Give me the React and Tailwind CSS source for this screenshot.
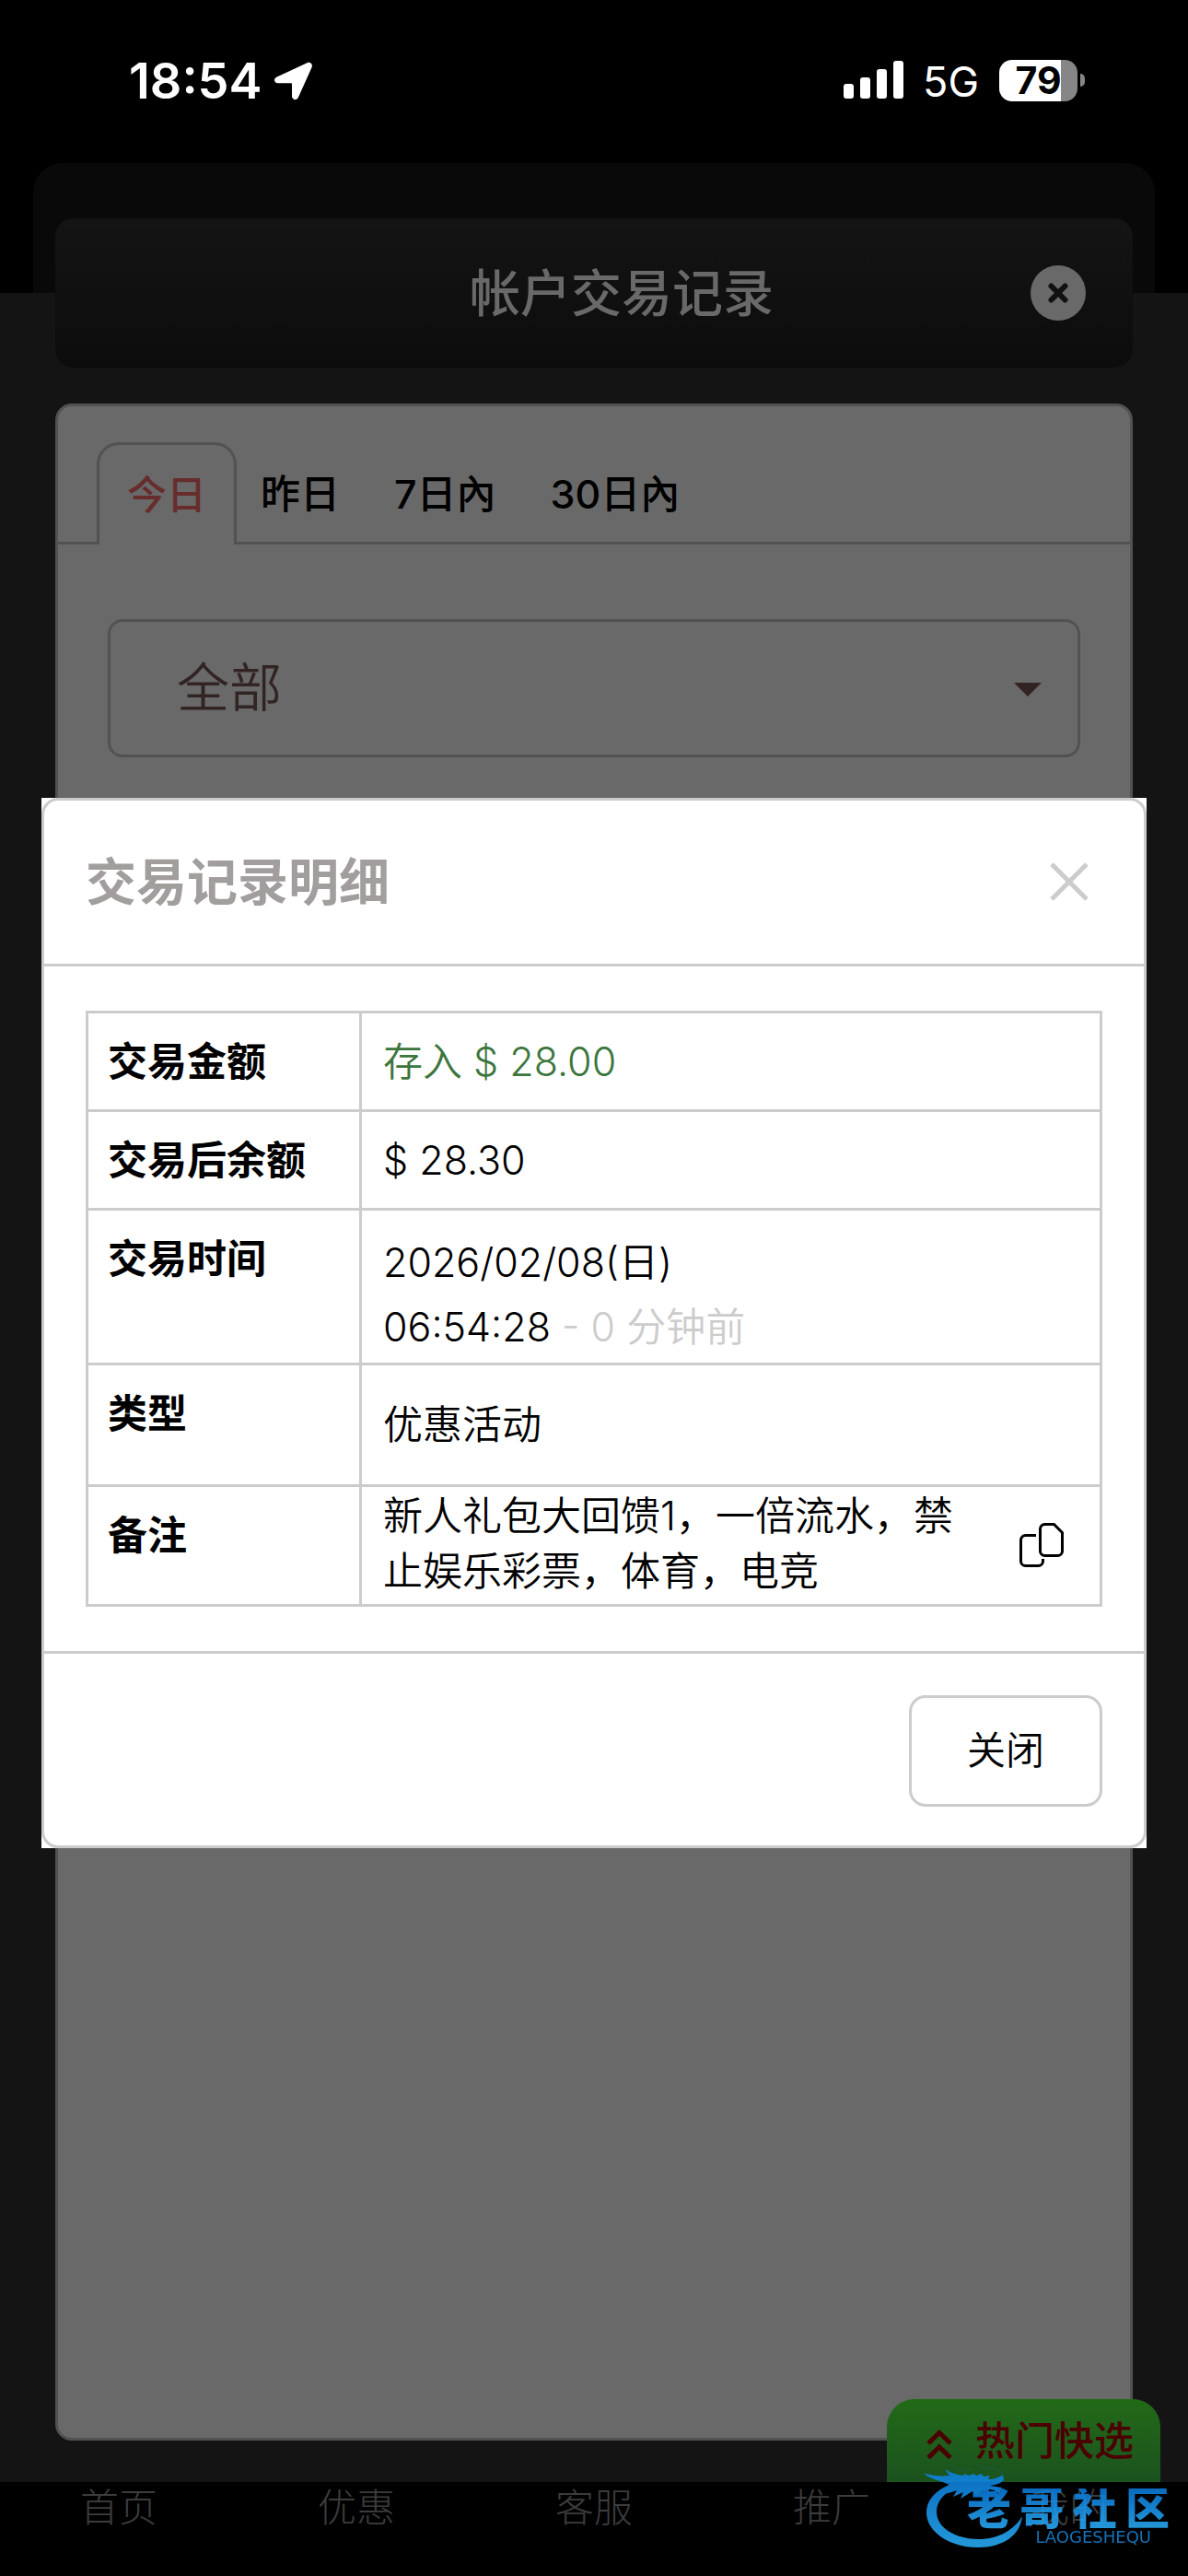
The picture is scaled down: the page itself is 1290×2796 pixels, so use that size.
import React from "react";

const tabs = ["今日", "昨日", "7日內", "30日內"];
const navItems = ["首页", "优惠", "客服", "推广", "我的"];

function StatusBar() {
  return (
    <div className="flex h-[177px] items-start justify-between pt-[55px] pr-[112px] pl-[140px] text-white">
      <div className="flex h-[66px] items-center gap-3">
        <span className="text-[54px] leading-[66px] font-semibold">18:54</span>
        <svg className="h-[44px] w-[44px]" viewBox="0 0 44 44" fill="#fff" aria-hidden="true">
          <path d="M36.5 2.2C39.6.8 43 3.600 41.600 7L27 39.500c-1.700 4-7 3.300-7-1.200V25.500c0-.8-.4-1.200-1.200-1.200H5c-4.600 0-5.400-5-1.300-6.900z" />
        </svg>
      </div>
      <div className="flex h-[64px] items-center">
        <svg className="h-[42px] w-[66px]" viewBox="0 0 66 42" fill="#fff" aria-hidden="true">
          <rect x="0" y="25" width="11" height="16" rx="3" />
          <rect x="18" y="18" width="11" height="23" rx="3" />
          <rect x="36" y="9" width="11" height="32" rx="3" />
          <rect x="54" y="0" width="11" height="41" rx="3" />
        </svg>
        <span className="ml-5 pt-1 text-[45px] leading-[64px]">5G</span>
        <div className="ml-[22px] flex items-center gap-[3px]">
          <div className="flex h-[45px] w-[85px] items-center justify-center rounded-[14px] bg-[linear-gradient(90deg,#fff_79%,#868686_79%)] text-[41px] leading-[45px] font-bold text-black">
            79
          </div>
          <div className="h-[14px] w-[5px] rounded-r-full bg-[#868686]" />
        </div>
      </div>
    </div>
  );
}

function Page() {
  return (
    <main className="relative flex flex-1 flex-col bg-[linear-gradient(#000_141px,#141414_141px)] px-[60px] pt-[60px] pb-[45px]">
      <div className="absolute inset-x-9 top-0 h-[141px] rounded-t-[32px] bg-[#090909]" />
      <header className="relative flex h-[162px] items-center justify-center rounded-[20px] bg-linear-to-b from-[#141414] to-[#0c0c0c]">
        <h1 className="pl-[60px] text-[55px] leading-[66px] font-medium text-[#696969]">帐户交易记录</h1>
        <button type="button" aria-label="关闭页面" className="absolute right-[51px]">
          <svg className="h-[60px] w-[60px]" viewBox="0 0 60 60" aria-hidden="true">
            <circle cx="30" cy="30" r="30" fill="#696969" />
            <path d="M22.500 22.500l15 15M37.500 22.500l-15 15" stroke="#111" strokeWidth="6" strokeLinecap="round" />
          </svg>
        </button>
      </header>
      <section className="relative mt-[39px] flex-1 rounded-[18px] border-[3px] border-[#525252] bg-[#696969]">
        <div role="tablist" className="flex items-end border-b-[3px] border-[#525252] pt-[39px] pl-[42px]">
          {tabs.map((t, i) => (
            <button
              key={t}
              type="button"
              role="tab"
              aria-selected={i === 0}
              className={
                i === 0
                  ? "-mr-[7px] -mb-[3px] h-[111px] rounded-t-[24px] border-[3px] border-b-0 border-[#525252] bg-[#696969] px-[30px] text-[43px] leading-[60px] font-medium text-[#672c2c]"
                  : "-mr-[7px] -mb-[3px] h-[111px] border-[3px] border-transparent px-[30px] text-[43px] leading-[60px] font-medium text-black"
              }
            >
              {t}
            </button>
          ))}
        </div>
        <div className="relative mx-[54px] mt-[81px]">
          <select
            aria-label="交易类型"
            className="h-[150px] w-full appearance-none rounded-[16px] border-[3px] border-[#525252] bg-[#696969] pl-[72px] text-[57px] font-[350] text-[#332424]"
          >
            <option>全部</option>
          </select>
          <svg className="pointer-events-none absolute top-[69px] right-[42px] h-[15px] w-[30px]" viewBox="0 0 30 15" fill="#332424" aria-hidden="true">
            <path d="M0 0h30L15 15z" />
          </svg>
        </div>
      </section>
    </main>
  );
}

function BottomNav() {
  return (
    <nav className="relative h-[102px] bg-black">
      <button
        type="button"
        className="absolute right-[30px] bottom-full flex h-[90px] w-[297px] items-center rounded-t-[30px] bg-linear-to-b from-[#226a16] to-[#1b521e] pl-[42px] text-[43px] leading-[60px] font-medium text-[#4a0000]"
      >
        <svg className="mt-[8px] mr-[24px] h-[32px] w-[30px]" viewBox="0 0 30 32" fill="none" stroke="#4a0000" strokeWidth="5" aria-hidden="true">
          <path d="M3 15L15 3.500 27 15M3 30.500L15 19l12 11.500" />
        </svg>
        热门快选
      </button>
      <div className="grid grid-cols-5">
        {navItems.map((n) => (
          <a key={n} href="#" className="text-center text-[42px] leading-[56px] font-light text-[#3c3c3c]">
            {n}
          </a>
        ))}
      </div>
      <Watermark />
    </nav>
  );
}

function Watermark() {
  return (
    <div className="pointer-events-none absolute right-[20px] bottom-[30px] flex h-[90px] w-[268px] opacity-85">
      <svg className="absolute inset-0 h-[90px] w-[110px]" viewBox="0 0 110 90" aria-hidden="true">
        <defs>
          <linearGradient id="wave" gradientUnits="userSpaceOnUse" x1="0" y1="6" x2="0" y2="90">
            <stop offset="0" stopColor="#0b80e4" />
            <stop offset="1" stopColor="#2bb4ff" />
          </linearGradient>
        </defs>
        <g fill="url(#wave)">
          <path d="M36 18C16 25 4 36 4 51c0 21 25 38 56 38 27 0 46-13 48-34-9 15-26 25-47 25C36 80 15 68 15 50c0-11 8-20 22-27z" />
          <path d="M1 8c8 3 17 4 28 3l-5-7c7 4 13 6 19 7l3-2 4 2 5-2 3 2 6-2 2 3 7-1-2 4c7 0 11-2 16-5l1 6c-4 4-9 5-15 6l13 2-3 6c-6-4-12-5-18-3l-7 5-4-4-13 8 3-7-11 5 4-7c-7 3-15 4-22 5 4-4 10-8 16-10C22 17 6 15 1 8z" />
        </g>
        <path d="M32 0c6 7 14 7 22 3M58 0c14 3 29 4 30 11" fill="none" stroke="#1d5a34" strokeWidth="2" />
      </svg>
      <div className="ml-[48px] flex flex-1 flex-col items-end">
        <div className="mt-[25px] flex w-full justify-between bg-linear-to-b from-[#0b7de0] to-[#2bb2ff] bg-clip-text text-[48px] leading-[44px] font-black text-transparent">
          <span>老</span>
          <span>哥</span>
          <span>社</span>
          <span>区</span>
        </div>
        <span className="mr-5 font-['DejaVu_Sans'] text-[18px] leading-[18px] text-[#1c86d6]">LAOGESHEQU</span>
      </div>
    </div>
  );
}

function Row({ label, children }) {
  return (
    <tr className="border-[3px] border-[#ccc]">
      <th scope="row" className="w-[297px] border-r-[3px] border-[#ccc] pt-[22px] pb-[22px] pl-[21px] text-left align-top text-[43px] leading-[60px] font-semibold">
        {label}
      </th>
      <td className="pl-[23px] text-[43px] leading-[60px] font-[350]">{children}</td>
    </tr>
  );
}

function DetailModal() {
  return (
    <div className="fixed inset-0 flex items-center justify-center px-[45px] pt-[75px]">
      <div role="dialog" aria-labelledby="detail-title" className="w-full bg-white text-black">
        <div className="rounded-[18px] border-[3px] border-[#ccc]">
          <div className="flex h-[180px] items-center justify-between border-b-[3px] border-[#ccc] pr-[60px] pl-[45px]">
            <h2 id="detail-title" className="text-[55px] leading-[66px] font-semibold text-[#a29e9d]">交易记录明细</h2>
            <button type="button" aria-label="关闭明细">
              <svg className="h-[42px] w-[42px]" viewBox="0 0 42 42" fill="none" stroke="#ccc" strokeWidth="5" aria-hidden="true">
                <path d="M2 2l38 38M40 2L2 40" />
              </svg>
            </button>
          </div>
          <div className="px-[45px] py-[48px]">
            <table className="w-full table-fixed border-collapse">
              <tbody>
                <Row label="交易金额">
                  <span className="text-[#3c763d]">存入 $ 28.00</span>
                </Row>
                <Row label="交易后余额">$ 28.30</Row>
                <Row label="交易时间">
                  <div className="pt-[21px] pb-1 leading-[70px]">
                    2026/02/08(日)
                    <br />
                    06:54:28 <span className="text-[#ccc]">- 0 分钟前</span>
                  </div>
                </Row>
                <Row label="类型">
                  <div className="flex h-[129px] items-center">优惠活动</div>
                </Row>
                <Row label="备注">
                  <div className="flex items-center pt-[1px] pb-[6px]">
                    <p className="flex-1">新人礼包大回馈1，一倍流水，禁止娱乐彩票，体育，电竞</p>
                    <button type="button" aria-label="复制备注" className="mt-1 mr-[39px] ml-[60px]">
                      <svg className="h-[48px] w-[48px]" viewBox="0 0 48 48" fill="none" stroke="#000" strokeWidth="3" aria-hidden="true">
                        <path d="M27.500 1.500h10l9 9v20a5 5 0 0 1-5 5h-14a5 5 0 0 1-5-5v-24a5 5 0 0 1 5-5z" />
                        <path d="M18 13.500H6.500a5 5 0 0 0-5 5v23a5 5 0 0 0 5 5h14a5 5 0 0 0 5-5V39" />
                      </svg>
                    </button>
                  </div>
                </Row>
              </tbody>
            </table>
          </div>
          <div className="flex justify-end border-t-[3px] border-[#ccc] px-[45px] pt-[45px] pb-[42px]">
            <button type="button" className="h-[121px] w-[210px] rounded-[18px] border-[3px] border-[#ccc] text-[42px] leading-[60px] font-[350]">
              关闭
            </button>
          </div>
        </div>
      </div>
    </div>
  );
}

export default function App() {
  return (
    <div className="flex min-h-screen flex-col bg-black font-[Inter,'Noto_Sans_CJK_SC',sans-serif]">
      <StatusBar />
      <Page />
      <BottomNav />
      <DetailModal />
    </div>
  );
}
